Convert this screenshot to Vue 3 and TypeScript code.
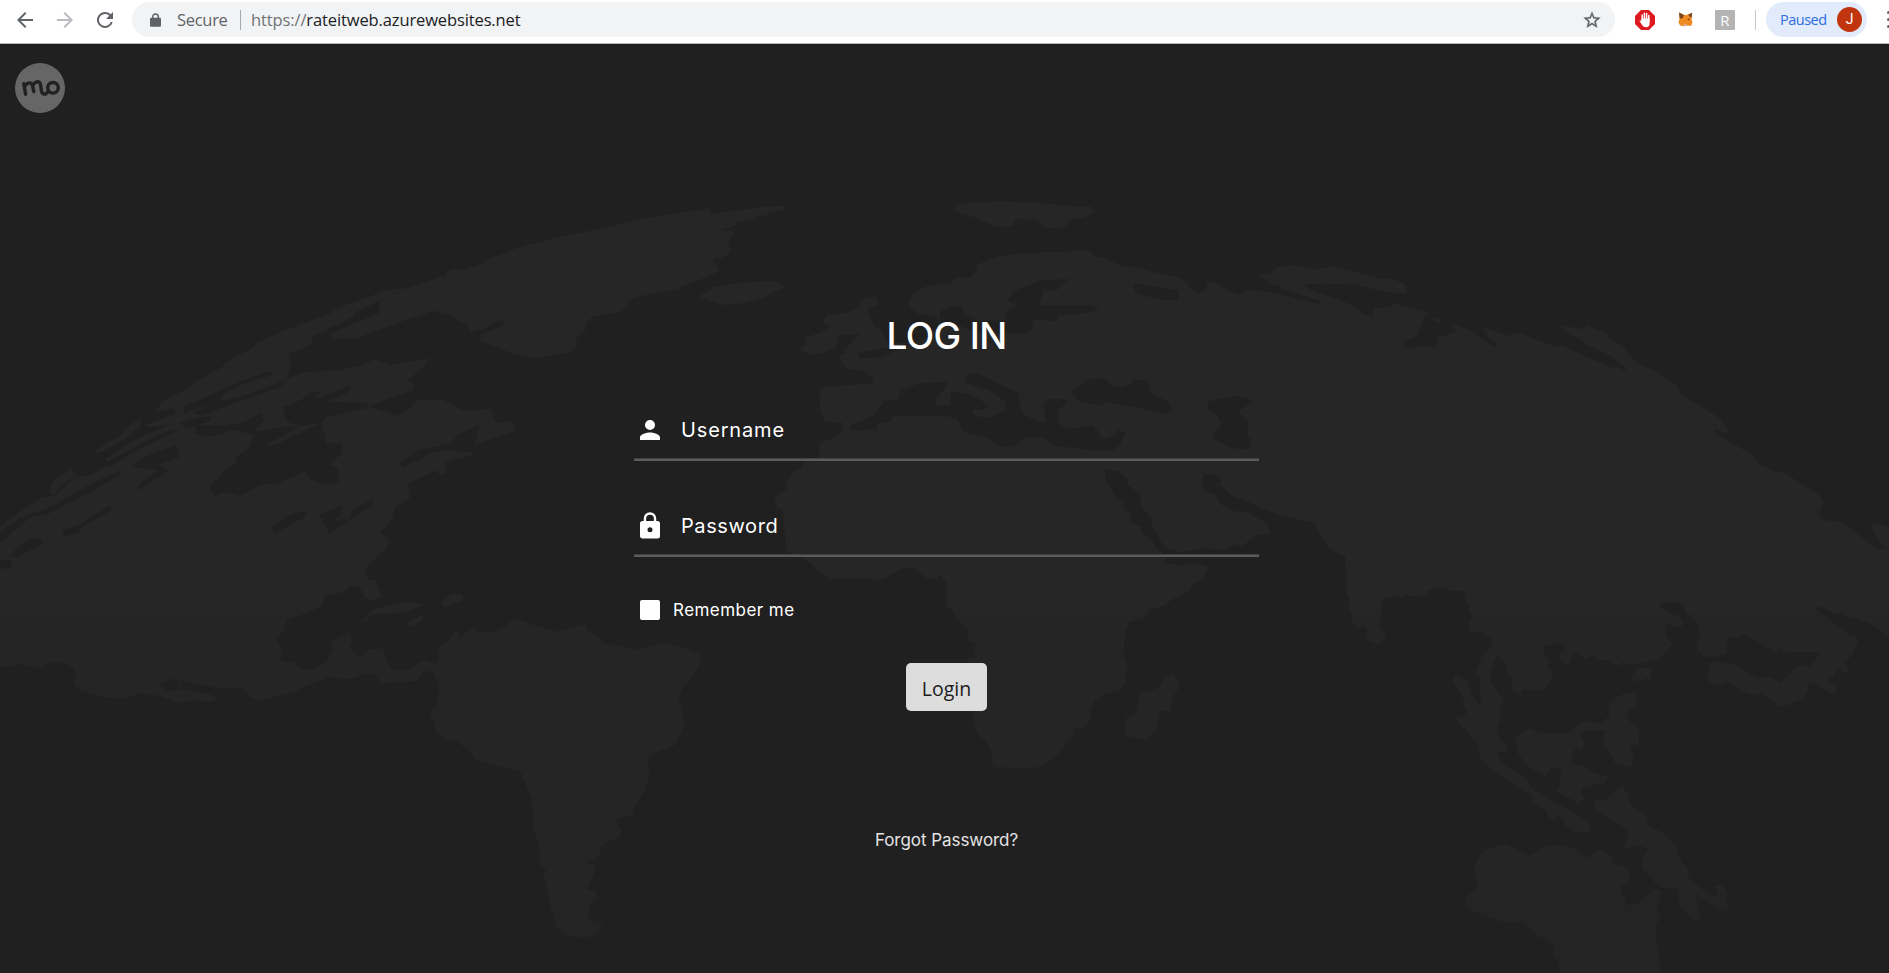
<script setup lang="ts">
import { ref } from 'vue'

interface Region {
  transform: string
  land: string[]
  sea: string[]
}

const username = ref('')
const password = ref('')

const regions: Region[] = [
  {
    transform: 'translate(0 180) scale(.5102 .33333)',
    land: [
      '1540,78 1500,80 1395,102 1390,86 1310,103 1250,120 1140,158 1090,172 1000,210 995,218 950,240 948,250 905,272 895,266 875,275 872,288 795,325 745,362 742,400 710,420 645,462 652,482 665,475 695,477 780,428 850,392 885,405 900,422 915,432 922,458 960,440 965,428 985,420 988,434 942,465 942,485 970,500 1000,518 1048,534 1085,525 1118,517 1132,497 1128,475 1146,455 1150,430 1160,412 1218,394 1242,352 1330,328 1335,318 1388,290 1410,272 1395,238 1418,232 1432,215 1426,178 1440,165 1436,152 1410,152 1440,138 1445,126 1475,120 1480,110 1504,105 1508,95 1538,90',
      '795,322 750,335 720,352 690,368 655,388 650,400 560,450 500,490 498,502 440,548 436,562 378,608 374,620 316,665 306,695 340,685 345,700 285,735 285,742 330,735 270,775 235,810 205,838 215,850 180,885 150,888 110,945 80,955 20,1015 0,1040 0,1200 720,1200 715,1165 755,1110 762,1080 745,1055 765,1030 775,980 803,955 800,912 855,870 862,885 875,880 870,850 925,825 930,795 1010,752 1005,722 972,730 960,685 940,690 905,690 870,660 820,658 800,690 780,708 735,685 720,680 808,630 815,615 798,602 830,560 840,535 765,555 735,538 710,555 660,572 600,575 560,598 570,560 566,522 612,492 612,470 695,408 698,395 745,362',
      '278,714 255,735 235,768 210,788 182,818 200,815 235,785 275,740',
      '140,868 105,900 96,935 106,945 115,925 150,885',
      '1370,350 1400,320 1470,305 1520,304 1537,320 1500,350 1455,370 1415,375',
    ],
    sea: [
      '235,872 180,910 100,980 40,1012 0,1055 0,1090 60,1010 90,1005 180,935 235,885',
      '630,728 640,790 670,790 670,820 645,855 662,865 663,905 640,915 610,900 597,875 545,910 510,915 470,948 440,935 420,948 412,920 440,870 465,850 462,832 490,800 497,765 460,750 410,770 380,760 385,735 425,738 470,730 510,700 518,720 497,755 560,740 590,738 515,800 545,790',
      '555,680 590,660 605,640 635,630 610,660 688,615 685,635 640,665 720,668 720,684 640,712 630,728 590,738 563,725',
      '530,572 470,605 360,680 360,700 430,665 440,640 480,610 535,585',
      '395,705 550,622 560,600 480,645 430,665 375,698',
      '345,795 352,830 310,855 333,870 270,932 270,915 310,870 260,860 275,835',
      '340,760 280,800 210,865 205,850 290,780 345,745',
      '415,710 412,722 370,745 350,730 390,712',
      '215,975 218,992 160,1040 155,1060 122,1072 125,1050 160,1030',
      '85,1078 80,1095 45,1122 20,1165 0,1170 0,1155 30,1110 60,1075',
      '600,995 598,1010 538,1062 530,1045 560,1010 590,993',
      '730,958 732,975 645,1062 640,1040 625,1005 670,975 672,995 655,1022 685,1015 690,990',
      '940,735 930,795 925,815 870,812 850,815 790,865 783,850 820,810 885,790 895,765',
    ],
  },
  {
    transform: 'translate(0 560) scale(.4847 .33333)',
    land: [
      '0,-10 770,-10 750,35 760,60 775,62 787,108 768,122 752,110 742,82 722,78 712,95 672,105 662,140 630,160 592,180 585,210 572,240 583,280 577,300 608,310 625,330 650,325 672,310 686,270 682,245 720,217 728,240 722,262 735,290 752,285 760,268 788,265 800,305 810,332 850,328 862,308 878,300 895,312 895,340 880,330 865,350 860,362 785,370 772,340 755,340 725,358 678,352 610,392 538,422 515,412 500,385 460,385 420,375 370,362 378,388 425,400 450,412 435,428 410,420 370,428 330,408 290,398 262,415 215,412 185,400 160,388 150,365 158,345 148,320 130,308 105,305 80,325 50,312 0,320',
      '765,150 820,128 870,130 870,138 830,158 765,165 755,190 748,180',
      '840,185 872,165 872,180 845,202',
      '910,125 935,100 955,105 955,120 915,143',
      '895,312 905,300 905,265 928,240 940,210 950,228 975,205 985,218 1015,215 1045,200 1055,180 1070,178 1100,195 1150,215 1208,193 1215,218 1232,228 1245,250 1315,268 1370,250 1420,268 1445,285 1445,310 1430,345 1410,380 1400,410 1412,485 1405,520 1393,555 1345,582 1335,605 1340,645 1330,690 1308,740 1305,765 1270,780 1282,815 1278,830 1250,848 1238,865 1236,888 1208,905 1230,920 1220,960 1212,990 1230,990 1232,1015 1215,1040 1214,1075 1245,1092 1235,1115 1210,1135 1165,1125 1148,1105 1135,1040 1130,990 1120,940 1128,930 1115,915 1112,860 1100,800 1098,720 1072,630 1010,612 978,598 972,575 940,542 918,538 898,515 897,480 886,465 902,430 907,385 895,340 880,330',
    ],
    sea: ['330,375 358,355 368,360 375,388 340,392', '0,0 25,0 22,22 8,28 0,22'],
  },
  {
    transform: 'translate(760 180) scale(.38265 .33333)',
    land: [
      '505,88 515,76 540,68 640,64 740,70 820,80 865,80 879,95 850,110 810,120 800,137 780,145 750,146 738,138 725,120 668,116 660,138 640,143 605,135 570,115 525,102',
      '388,370 400,340 432,320 500,308 515,293 548,293 568,270 565,255 620,230 660,222 730,222 735,215 795,217 820,210 865,213 875,230 910,237 935,255 990,265 1020,275 1095,292 1118,310 1122,325 1150,338 1165,330 1170,304 1200,312 1225,335 1255,345 1270,330 1340,337 1460,372 1465,362 1370,330 1362,318 1330,308 1310,285 1335,285 1350,262 1390,256 1440,268 1500,262 1568,280 1568,315 1540,310 1422,312 1430,325 1480,345 1540,372 1568,395 1568,1200 1535,1200 1530,1130 1480,1090 1465,1050 1450,1030 1350,1000 1235,948 1205,915 1190,917 1208,905 1190,885 1160,882 1155,905 1162,932 1192,945 1200,970 1235,993 1275,997 1330,1035 1332,1058 1300,1065 1260,1097 1235,1093 1215,1110 1160,1105 1100,1117 1058,1105 1022,1035 1025,1020 995,975 995,950 975,925 960,915 963,900 940,875 902,868 902,895 930,955 950,965 950,985 972,1005 965,1025 995,1040 1000,1065 1015,1075 1060,1133 1055,1148 1100,1158 1130,1150 1170,1162 1155,1200 480,1200 470,1185 450,1195 405,1165 370,1165 325,1195 190,1195 150,1165 100,1125 70,1115 58,990 45,985 38,950 68,930 68,910 90,870 110,868 110,852 155,832 155,790 175,780 205,768 218,750 215,727 170,727 157,690 155,635 170,620 275,612 297,615 293,590 265,570 225,568 205,530 225,515 200,503 160,520 130,525 105,508 120,492 120,470 160,458 185,438 165,425 175,405 225,398 258,382 262,365 280,352 305,352 307,375 280,385 290,420 300,440 320,452 330,490 400,490 440,470 465,440 465,415 410,400 388,378',
    ],
    sea: [
      '470,395 495,378 530,378 532,405 555,410 570,422 640,422 645,395 672,378 648,360 660,335 735,300 808,297 775,330 742,332 728,377 870,375 885,393 780,408 780,423 715,420 710,445 697,462 640,462 560,455 530,440 470,430',
      '975,310 1095,330 1092,362 1040,358 980,338',
      '813,638 855,598 905,596 918,615 945,623 970,612 975,597 1013,602 1020,635 1065,665 1078,690 1062,702 980,680 898,667 895,677 835,665',
      '1170,665 1235,648 1270,652 1293,667 1252,690 1255,702 1275,725 1273,765 1283,780 1280,808 1235,805 1185,778 1185,755 1207,738 1195,705 1172,688',
      '238,735 300,705 325,663 360,660 370,628 420,610 490,605 475,640 460,655 460,675 497,675 500,636 540,640 575,658 597,680 580,690 552,688 560,708 600,713 642,690 640,665 600,630 540,610 535,595 550,580 565,578 677,640 680,675 690,703 725,725 747,730 742,670 755,657 803,658 800,672 778,690 780,730 805,747 868,735 885,755 895,778 925,765 935,748 955,760 940,795 920,812 860,810 760,795 745,775 705,772 675,785 662,802 625,800 595,772 530,755 515,718 490,709 345,709 342,725 308,728 305,748 240,752',
      '205,465 260,463 245,480 230,500 210,515 200,503',
      '255,518 325,505 380,492 400,490 335,522 300,533 262,535',
    ],
  },
  {
    transform: 'translate(1260 220) scale(.40115 .33333)',
    land: [
      '0,160 38,163 42,142 80,136 130,148 170,147 178,139 305,178 318,175 352,187 366,203 363,222 310,215 225,190 180,191 165,195 135,192 108,193 115,208 175,235 225,252 260,285 281,292 283,266 330,260 335,250 415,277 430,293 452,295 488,316 520,328 570,372 588,382 593,372 570,352 555,328 562,323 620,348 645,338 738,382 752,377 880,445 888,440 910,453 913,443 870,405 815,375 800,357 765,340 750,318 778,322 808,328 815,316 865,342 875,358 905,378 918,403 945,433 985,453 1030,487 1045,508 1048,525 1085,548 1150,598 1170,642 1135,628 1132,638 1235,710 1242,732 1292,760 1302,754 1392,824 1404,850 1394,875 1396,890 1410,902 1435,903 1458,913 1540,988 1562,984 1540,958 1524,920 1534,910 1568,922 1568,1080 217,1080 220,1050 212,1040 214,1012 168,982 166,962 150,945 136,908 40,882 0,862 0,215 75,235 150,255 150,240 130,230 55,208 53,198 22,190 15,178 0,168',
    ],
    sea: ['410,285 430,293 435,305 450,309 455,295 475,300 488,332 475,343 443,350 440,385 405,379 370,388 356,375 358,365 392,348'],
  },
  {
    transform: 'translate(1260 573) scale(.40115 .33333)',
    land: [
      '220,-10 215,20 218,70 224,80 219,105 227,115 232,155 245,165 260,158 268,172 261,193 275,207 298,215 312,195 312,178 298,168 305,78 340,68 350,75 362,65 380,70 415,65 418,53 448,44 480,53 505,54 512,65 512,88 522,100 519,112 528,128 519,155 525,177 555,178 578,192 578,212 570,232 558,235 536,300 546,305 550,335 547,360 555,395 551,400 528,368 518,325 487,306 480,325 510,375 503,392 516,415 508,432 490,430 498,455 518,475 543,515 548,555 560,572 630,633 677,665 682,690 712,712 718,732 732,740 740,728 755,738 758,755 782,774 820,778 825,757 815,740 795,730 675,645 668,618 603,573 590,535 612,538 619,520 598,500 590,465 601,440 598,410 607,382 575,325 575,290 595,240 598,258 612,275 615,298 628,312 629,355 650,365 653,350 700,353 722,330 730,298 718,285 720,262 710,248 708,212 720,220 740,208 758,213 760,230 750,237 747,265 768,277 782,238 815,260 828,248 848,262 865,260 893,280 905,266 925,276 995,257 1030,213 1013,190 1010,160 1018,150 1042,165 1053,158 1052,142 1040,128 1015,118 996,98 1002,88 1038,86 1055,100 1063,122 1090,145 1092,170 1100,185 1090,210 1092,235 1110,250 1130,251 1162,242 1167,190 1190,198 1200,187 1215,187 1285,240 1293,224 1312,238 1385,237 1394,245 1375,278 1340,280 1295,330 1272,310 1262,316 1252,308 1243,317 1185,276 1160,270 1115,270 1122,288 1115,322 1132,335 1152,335 1165,323 1215,362 1242,368 1250,360 1295,398 1315,397 1352,377 1362,358 1370,323 1432,367 1437,345 1415,318 1430,313 1438,283 1460,300 1471,295 1458,272 1480,238 1492,200 1478,185 1468,187 1385,108 1392,98 1440,125 1450,122 1472,137 1478,130 1500,143 1515,145 1568,192 1568,-10',
      '922,320 940,285 975,285 975,318 958,316 950,327',
      '872,385 905,363 935,360 941,395 912,422 925,450 944,465 945,512 920,523 931,545 927,585 885,572 872,535 855,508 860,472 820,472 795,485 812,512 798,530 790,522 776,545 776,568 788,580 798,572 830,597 868,613 852,640 835,628 826,647 805,638 798,655 810,675 795,692 740,655 748,640 748,610 755,597 730,580 712,610 670,582 645,545 635,505 645,483 672,467 695,479 775,480 795,452 812,444 850,450 870,430',
      '833,685 862,680 898,640 905,642 919,665 920,692 965,728 965,750 980,768 1000,775 1035,815 1050,865 1065,888 1070,918 1100,948 1133,972 1145,965 1133,938 1155,940 1165,965 1165,1012 1140,1003 1085,965 1098,1025 1088,1047 1045,995 1045,955 1035,942 1010,948 985,930 970,905 952,887 953,860 967,828 942,815 915,830 908,820 917,800 917,775 900,755 835,712',
      '535,885 545,853 570,825 610,814 640,827 670,848 705,825 740,815 785,826 815,857 845,827 877,848 880,873 920,885 920,925 898,945 915,996 935,995 985,948 1000,955 1000,972 988,1000 1000,1030 985,1065 990,1110 1000,1200 750,1200 743,1165 730,1150 730,1110 695,1090 650,1043 610,1049 520,1010 510,972 535,955 542,930',
    ],
    sea: [],
  },
  {
    transform: 'translate(760 440) scale(.33333)',
    land: [
      '78,280 80,335 140,350 155,372 170,390 215,417 340,410 345,420 375,418 390,400 420,385 465,384 485,403 500,415 530,415 535,405 557,415 558,500 578,510 590,540 605,548 623,570 625,602 645,612 643,650 625,652 625,668 641,812 641,850 655,885 675,900 700,945 690,962 705,981 770,984 835,982 870,962 912,925 920,902 938,893 945,865 970,865 988,845 992,810 1005,780 1022,780 1030,765 1080,750 1095,730 1102,672 1090,645 1095,575 1108,547 1155,533 1172,507 1212,498 1240,475 1285,455 1305,430 1328,418 1345,380 1305,368 1265,378 1212,368 1220,352 1190,335 1145,280',
      '1092,887 1100,830 1130,818 1140,757 1165,755 1200,742 1218,710 1240,702 1255,725 1253,750 1238,770 1230,812 1200,812 1190,865 1163,900 1110,890',
    ],
    sea: [],
  },
]
</script>

<template>
  <div class="window">
    <header class="toolbar">
      <svg class="nav back" viewBox="0 0 24 24"><path d="M20 11H7.8l5.6-5.6L12 4l-8 8 8 8 1.4-1.4L7.8 13H20z" /></svg>
      <svg class="nav forward" viewBox="0 0 24 24"><path d="M4 11h12.2l-5.6-5.6L12 4l8 8-8 8-1.4-1.4 5.6-5.6H4z" /></svg>
      <svg class="nav reload" viewBox="0 0 24 24"><path d="M17.65 6.35A8 8 0 1 0 19.73 14h-2.08A6 6 0 1 1 12 6c1.66 0 3.14.69 4.22 1.78L13 11h7V4z" /></svg>
      <div class="omnibox">
        <svg class="padlock" viewBox="0 0 11 14"><path d="M2.7 5V3.7a2.8 2.8 0 0 1 5.6 0V5" fill="none" stroke="#5f6368" stroke-width="1.5" /><rect y="4.8" width="11" height="9" rx="1.2" fill="#5f6368" /></svg>
        <span class="secure">Secure</span>
        <span class="rule"></span>
        <span class="url"><span class="scheme">https://</span>rateitweb.azurewebsites.net</span>
        <svg class="star" viewBox="0 0 24 24"><path d="M22 9.24l-7.19-.62L12 2 9.19 8.63 2 9.24l5.46 4.73L5.82 21 12 17.27 18.18 21l-1.63-7.03zM12 15.4l-3.76 2.27 1-4.28-3.32-2.88 4.38-.38L12 6.1l1.71 4.04 4.38.38-3.32 2.88 1 4.28z" /></svg>
      </div>
      <svg class="blocker" viewBox="0 0 20 20">
        <path d="M6 0h8l6 6v8l-6 6H6l-6-6V6z" fill="#dd1a1f" />
        <path d="M7.2 11V5M9.4 10V3.3M11.6 10V3.6M13.8 11V5.4" stroke="#fff" stroke-width="1.5" stroke-linecap="round" />
        <path d="M6.4 8.5h8.2v5c0 2-1.2 3.8-3.4 3.8-2.8 0-3.6-1.4-4.8-3.2L4.5 11c.5-.8 1.4-.4 1.9.4z" fill="#fff" />
      </svg>
      <svg class="fox" viewBox="0 0 15 15">
        <path d="M1 .6 6 3l4-.2L14.2.7l-.7 6 1 4-1.5 3.2-4-.4-2.5.8L2 13.6.4 10l1.3-3z" fill="#ee8a1f" />
        <path d="M1 .6 6 3 4.8 6 1.7 6.8zM10 2.8 14.2.7l-.7 5.5zM9.4 6.6l2.8.4-1.8 1.6z" fill="#7b451f" />
        <path d="m5 12.4 3.2-.5 1 1.6-2.7.8z" fill="#d7b29a" />
      </svg>
      <span class="ext-r">R</span>
      <span class="rule tall"></span>
      <div class="profile"><span>Paused</span><b>J</b></div>
      <span class="dots"><i></i><i></i><i></i></span>
    </header>

    <main class="page">
      <svg class="map" viewBox="0 44 1889 929" aria-hidden="true">
        <mask id="continents" maskUnits="userSpaceOnUse" x="0" y="44" width="1889" height="929">
          <g v-for="region in regions" :key="region.transform" :transform="region.transform">
            <polygon v-for="p in region.land" :key="p" :points="p" fill="#fff" />
            <polygon v-for="p in region.sea" :key="p" :points="p" fill="#000" />
          </g>
        </mask>
        <g mask="url(#continents)">
          <rect y="44" width="1889" height="567" fill="#262626" />
          <rect y="611" width="1889" height="284" fill="#252525" />
          <rect y="895" width="1889" height="78" fill="#242424" />
        </g>
      </svg>

      <svg class="logo" viewBox="0 0 50 50">
        <circle cx="25" cy="25" r="25" fill="#666" />
        <g fill="none" stroke="#212121" stroke-width="3.4" stroke-linecap="round" stroke-linejoin="round">
          <path d="M8.8 20.6l1.8 10.6M9.6 24c.8-3.8 7-6.2 8-1.4l1.2 6M17.6 23c1.6-4.6 7.2-6.2 8-1.2l.8 5.6c.6 4.2 4.2 5.2 6.4 1.2" />
          <circle cx="38" cy="24.8" r="5.3" />
        </g>
      </svg>

      <form class="login" @submit.prevent>
        <h1>LOG IN</h1>
        <label class="field first">
          <svg viewBox="0 0 24 24"><path d="M12 12a4 4 0 1 0 0-8 4 4 0 0 0 0 8zm0 2c-2.67 0-8 1.34-8 4v2h16v-2c0-2.66-5.33-4-8-4z" /></svg>
          <input v-model="username" class="user" type="text" placeholder="Username" />
        </label>
        <label class="field">
          <svg viewBox="0 0 24 24"><path d="M18 8h-1V6A5 5 0 0 0 7 6v2H6a2 2 0 0 0-2 2v10c0 1.1.9 2 2 2h12a2 2 0 0 0 2-2V10a2 2 0 0 0-2-2zm-6 9a2 2 0 1 1 0-4 2 2 0 0 1 0 4zm3.1-9H8.9V6a3.1 3.1 0 0 1 6.2 0z" /></svg>
          <input v-model="password" class="pass" type="password" placeholder="Password" />
        </label>
        <div class="remember"><i></i><span>Remember me</span></div>
        <button type="submit">Login</button>
        <a class="forgot">Forgot Password?</a>
      </form>
    </main>
  </div>
</template>

<style>
body { margin: 0; background: #202020; overflow: hidden; }
</style>

<style scoped>
.window { width: 1889px; height: 973px; display: flex; flex-direction: column; overflow: hidden; font-family: "Open Sans", "Noto Sans", sans-serif; }
.toolbar { box-sizing: border-box; height: 44px; flex: none; display: flex; align-items: center; padding: 0 0 4px 13px; background: #fff; border-bottom: 1px solid #b3b7b8; overflow: hidden; }
.toolbar svg { flex: none; }
.nav { width: 24px; height: 24px; fill: #5f6368; }
.forward { margin-left: 16px; fill: #b9bbbe; }
.reload { margin-left: 16px; }
.omnibox { box-sizing: border-box; width: 1483px; height: 35px; margin-left: 15px; padding: 0 13px 0 18px; border-radius: 18px; background: #f1f3f4; display: flex; align-items: center; flex: none; color: #202124; font-size: 16.5px; white-space: nowrap; }
.padlock { width: 11px; height: 14px; }
.secure { margin-left: 16px; width: 63px; color: #5f6368; letter-spacing: -.3px; }
.rule { width: 1px; height: 20px; background: #a5a8ac; flex: none; }
.url { margin-left: 10px; flex: 1; letter-spacing: -.12px; }
.scheme { color: #6f7377; }
.star { width: 20px; height: 20px; fill: #5f6368; stroke: #5f6368; stroke-width: .4; }
.blocker { width: 20px; height: 20px; margin-left: 20px; }
.fox { width: 15px; height: 15px; margin-left: 23px; }
.ext-r { width: 20px; height: 20px; margin-left: 22px; flex: none; background: #b4b4b4; color: #fff; font: 15px/20px "Open Sans", sans-serif; text-align: center; border-radius: 1px; }
.tall { margin-left: 20px; background: #c8cacc; }
.profile { box-sizing: border-box; width: 101px; height: 35px; margin-left: 10px; padding: 0 5px 0 14px; border-radius: 18px; background: #e1ebfb; color: #2c6de0; display: flex; align-items: center; justify-content: space-between; flex: none; font-size: 14.5px; letter-spacing: -.5px; }
.profile b { width: 25px; height: 25px; border-radius: 50%; background: #c1350e; color: #fff; font: 14px/25px Roboto, sans-serif; letter-spacing: 0; text-align: center; }
.dots { margin-left: 20px; display: grid; gap: 4px; flex: none; }
.dots i { width: 3px; height: 3px; background: #5f6368; border-radius: 50%; }

.page { position: relative; flex: 1; background: #202020; }
.map { position: absolute; left: 0; top: 0; width: 1889px; height: 929px; }
.logo { position: absolute; left: 15px; top: 19px; width: 50px; height: 50px; }
.login { position: relative; width: 625px; margin: 0 0 0 634px; padding-top: 264px; display: flex; flex-direction: column; align-items: center; color: #fff; font-family: Inter, sans-serif; }
h1 { margin: 0; height: 56px; line-height: 56px; font-size: 37px; font-weight: 500; letter-spacing: -.6px; white-space: nowrap; }
.field { box-sizing: border-box; width: 625px; height: 96px; display: flex; align-items: flex-end; padding: 0 0 14px 1px; border-bottom: 2px solid #5b5b5b; box-shadow: inset 0 -1px #414141; }
.field.first { height: 97px; }
.field svg { width: 30px; height: 30px; fill: #fff; flex: none; }
.field input { flex: 1; min-width: 0; height: 30px; margin-left: 16px; padding: 0; border: 0; outline: 0; background: transparent; color: #fff; font: 20px/30px Inter, sans-serif; }
.field input.user { letter-spacing: .85px; }
.field input.pass { letter-spacing: .6px; }
.field input::placeholder { color: #fff; opacity: 1; }
.remember { align-self: stretch; display: flex; align-items: center; height: 20px; margin: 43px 0 0 6px; font-size: 17px; letter-spacing: .45px; }
.remember i { width: 20px; height: 20px; border-radius: 2px; background: #fff; }
.remember span { margin-left: 13px; white-space: nowrap; }
button { width: 81px; height: 48px; margin-top: 43px; padding: 4px 0 0; border: 0; border-radius: 5px; background: #ddd; color: #1c1c1c; font: 19.5px/1 "Open Sans", sans-serif; }
.forgot { margin-top: 117px; height: 24px; line-height: 24px; font-size: 17px; letter-spacing: -.05px; color: #e4e4e4; white-space: nowrap; }
</style>
